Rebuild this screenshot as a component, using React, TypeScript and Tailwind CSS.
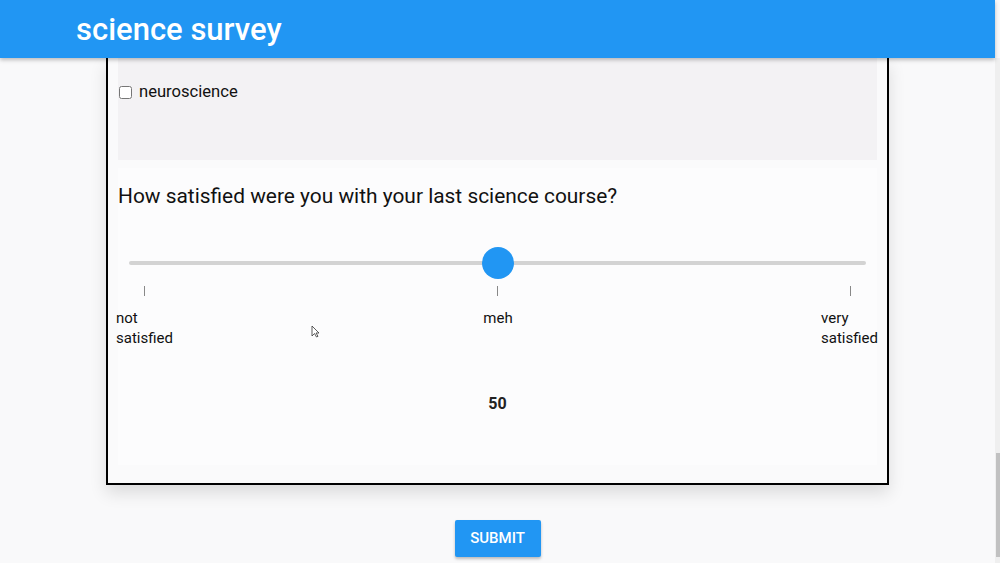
import { useState } from "react";

const font = { fontFamily: "Roboto, 'Liberation Sans', sans-serif" };

function Slider({ value, onChange }: { value: number; onChange: (v: number) => void }) {
  return (
    <div className="relative mx-[11px] h-[32px]">
      <div className="absolute left-0 right-0 top-[14px] h-[4px] rounded-full bg-[#d3d3d3]" />
      <input
        type="range"
        min={0}
        max={100}
        value={value}
        onChange={(e) => onChange(Number(e.target.value))}
        className="absolute inset-0 w-full cursor-pointer opacity-0"
      />
      <div
        className="pointer-events-none absolute top-0 h-[32px] w-[32px] -translate-x-1/2 rounded-full bg-[#2196f3]"
        style={{ left: `${value}%` }}
      />
    </div>
  );
}

export default function App() {
  const [value, setValue] = useState(50);
  const [neuro, setNeuro] = useState(false);

  return (
    <div className="relative flex min-h-[563px] overflow-hidden bg-[#f9f9fa]" style={font}>
      <div className="flex-1">
        <header className="relative z-10 flex h-[58px] items-center bg-[#2196f3] px-[76px] shadow-[0_2px_4px_rgba(0,0,0,0.25)]">
          <h1 className="text-[31px] font-medium leading-none text-white">science survey</h1>
        </header>

        <main className="flex flex-col items-center">
          <div className="w-[783px] border-x-2 border-b-2 border-black bg-[#fafafb] px-[10px] pb-[18px] shadow-[0_8px_16px_rgba(0,0,0,0.12)]">
            <section className="h-[102px] bg-[#f3f2f4] pt-[22px]">
              <label className="flex items-center gap-[7px] pl-[1px] text-[16.6px] text-[#111]">
                <input
                  type="checkbox"
                  checked={neuro}
                  onChange={(e) => setNeuro(e.target.checked)}
                  className="h-[13px] w-[13px] accent-[#2196f3]"
                />
                neuroscience
              </label>
            </section>

            <section className="mt-[8px] h-[297px] bg-[#fcfcfd] pt-[14px]">
              <h2 className="text-[20.9px] leading-[28px] text-[#111]">
                How satisfied were you with your last science course?
              </h2>

              <div className="mt-[37px]">
                <Slider value={value} onChange={setValue} />
              </div>

              <div className="mx-[26px] mt-[7px] flex justify-between">
                <span className="h-[10px] w-px bg-[#888]" />
                <span className="h-[10px] w-px bg-[#888]" />
                <span className="h-[10px] w-px bg-[#888]" />
              </div>

              <div className="mt-[12px] flex justify-between text-[15px] leading-[20px] text-[#111]">
                <span className="ml-[-2px]">
                  not
                  <br />
                  satisfied
                </span>
                <span className="ml-[2px]">meh</span>
                <span className="mr-[-1px]">
                  very
                  <br />
                  satisfied
                </span>
              </div>

              <p className="mt-[44px] text-center text-[16px] font-bold text-[#222]">{value}</p>
            </section>
          </div>

          <button className="mt-[35px] h-[37px] w-[86px] rounded-[2px] bg-[#2196f3] text-[15px] font-medium uppercase text-white shadow-[0_2px_3px_rgba(0,0,0,0.25)]">
            Submit
          </button>
        </main>
      </div>

      <div className="relative mt-[58px] w-[5px] bg-[#efefef]">
        <div className="absolute right-0 top-[395px] h-[104px] w-[4px] bg-[#c1c1c1]" />
      </div>

      <svg className="pointer-events-none absolute left-[311px] top-[325px]" width="9" height="13" viewBox="0 0 9 13">
        <path d="M1 1 L1 11 L3.5 8.5 L5.5 12 L7 11.3 L5 8 L8 8 Z" fill="#fff" stroke="#333" strokeWidth="0.8" />
      </svg>
    </div>
  );
}
